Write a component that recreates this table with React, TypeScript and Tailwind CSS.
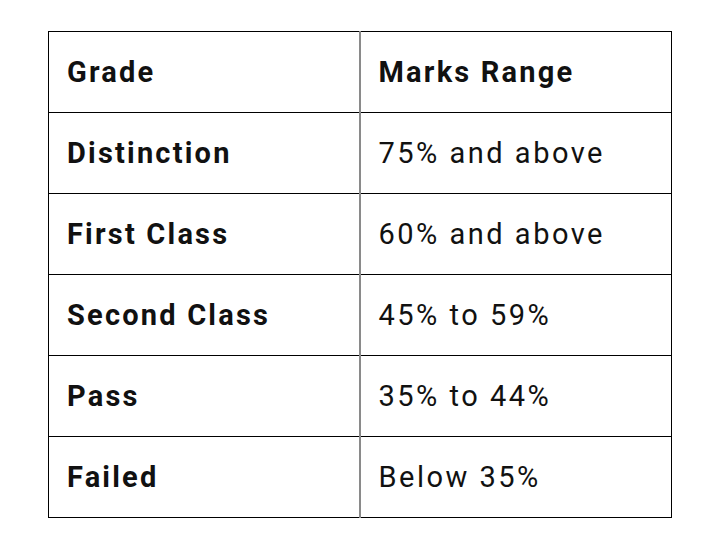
const rows = [
  { grade: "Distinction", range: "75% and above" },
  { grade: "First Class", range: "60% and above" },
  { grade: "Second Class", range: "45% to 59%" },
  { grade: "Pass", range: "35% to 44%" },
  { grade: "Failed", range: "Below 35%" },
]

export default function App() {
  return (
    <div className="w-[720px] h-[550px] bg-white pt-[31px] pl-[48px] font-['Roboto',sans-serif] text-[#111]">
      <table className="w-[624px] border-collapse border border-black">
        <thead>
          <tr className="h-[81px]">
            <th className="w-[311px] border-b border-black border-r-2 border-r-[#8a8a8a] pl-[18px] pt-[2px] text-left text-[29px] font-bold tracking-[2.2px]">
              Grade
            </th>
            <th className="border-b border-black pl-[18px] pt-[2px] text-left text-[29px] font-bold tracking-[2.2px]">
              Marks Range
            </th>
          </tr>
        </thead>
        <tbody>
          {rows.map(({ grade, range }) => (
            <tr key={grade} className="h-[81px]">
              <td className="border-b border-black border-r-2 border-r-[#8a8a8a] pl-[18px] pt-[2px] text-[29px] font-bold tracking-[2.2px]">
                {grade}
              </td>
              <td className="border-b border-black pl-[18px] pt-[2px] text-[29px] tracking-[2.5px]">{range}</td>
            </tr>
          ))}
        </tbody>
      </table>
    </div>
  )
}
